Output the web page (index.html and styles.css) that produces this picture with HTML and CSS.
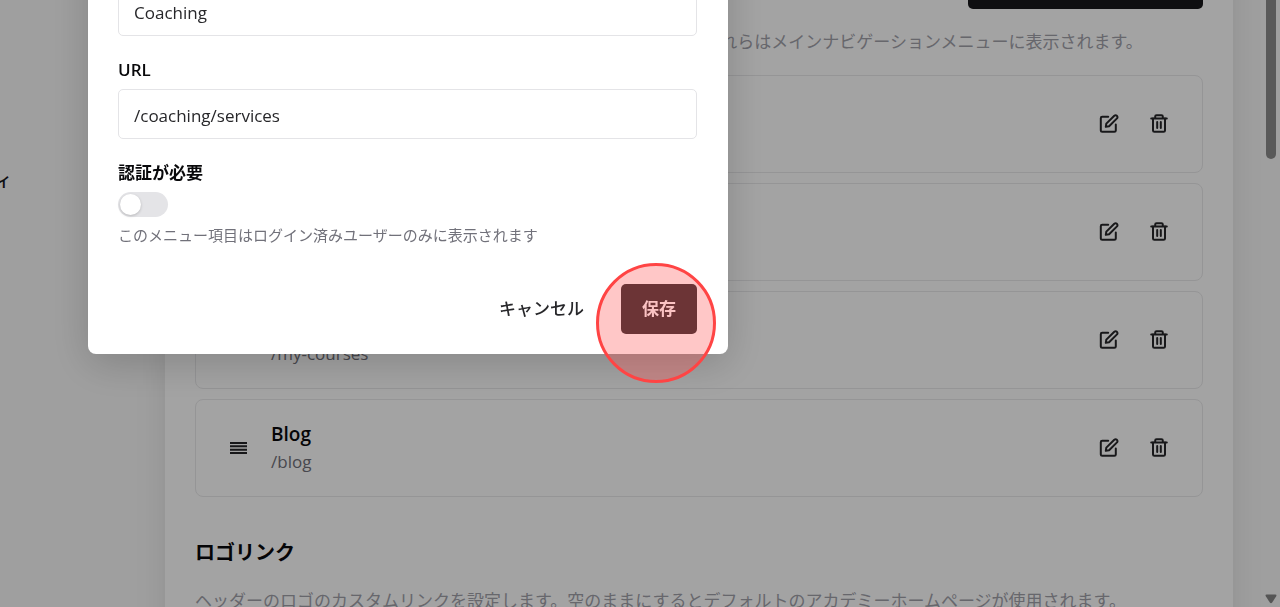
FILE: index.html
```html
<!DOCTYPE html>
<html lang="ja">

	<head>
		<meta charset="UTF-8">
		<title>ナビゲーション</title>
		<link rel="stylesheet" href="styles.css">
	</head>

	<body>
		<svg class="sprite">
			<symbol id="edit" viewBox="0 0 20 20">
				<path d="M9.2 2.8H3.2Q1.8 2.8 1.8 4.2V16.4Q1.8 17.8 3.2 17.8H15.4Q16.8 17.8 16.8 16.4V10.4" />
				<path d="M6.8 12.8L7.3 9.6L15.3 1.7Q16.6 .7 17.9 1.8Q19 3.1 18 4.4L10.1 12.3Z" />
			</symbol>
			<symbol id="trash" viewBox="0 0 20 20">
				<path d="M2.2 4.4H17.8M6.2 4.2V2.6Q6.2 1.3 7.5 1.3H12.5Q13.8 1.3 13.8 2.6V4.2" />
				<path d="M4 4.6V16.4Q4 17.8 5.4 17.8H14.6Q16 17.8 16 16.4V4.6M8.2 8V14M11.8 8V14" />
			</symbol>
			<symbol id="drag" viewBox="0 0 18 14">
				<path d="M0 1.9H17M0 5.3H17M0 8.7H17M0 12.1H17" />
			</symbol>
		</svg>

		<div class="page">
			<nav class="sidebar">
				<a href="#">コミュニティ</a>
			</nav>

			<main class="card">
				<div class="card-head">
					<button class="add" type="button">メニュー項目を追加する</button>
				</div>
				<p class="desc">ヘッダーに表示されるメニュー項目を追加・編集・削除できます。これらはメインナビゲーションメニューに表示されます。</p>

				<ul class="items">
					<li>
						<svg class="drag"><use href="#drag" /></svg>
						<div class="info">
							<h3>Home</h3>
							<p>/home</p>
						</div>
						<button type="button" aria-label="編集"><svg><use href="#edit" /></svg></button>
						<button type="button" aria-label="削除"><svg><use href="#trash" /></svg></button>
					</li>
					<li>
						<svg class="drag"><use href="#drag" /></svg>
						<div class="info">
							<h3>Courses</h3>
							<p>/courses</p>
						</div>
						<button type="button" aria-label="編集"><svg><use href="#edit" /></svg></button>
						<button type="button" aria-label="削除"><svg><use href="#trash" /></svg></button>
					</li>
					<li>
						<svg class="drag"><use href="#drag" /></svg>
						<div class="info">
							<h3>My Courses</h3>
							<p>/my-courses</p>
						</div>
						<button type="button" aria-label="編集"><svg><use href="#edit" /></svg></button>
						<button type="button" aria-label="削除"><svg><use href="#trash" /></svg></button>
					</li>
					<li>
						<svg class="drag"><use href="#drag" /></svg>
						<div class="info">
							<h3>Blog</h3>
							<p>/blog</p>
						</div>
						<button type="button" aria-label="編集"><svg><use href="#edit" /></svg></button>
						<button type="button" aria-label="削除"><svg><use href="#trash" /></svg></button>
					</li>
				</ul>

				<h2>ロゴリンク</h2>
				<p class="desc">ヘッダーのロゴのカスタムリンクを設定します。空のままにするとデフォルトのアカデミーホームページが使用されます。</p>
			</main>
		</div>

		<div class="scrollbar">
			<span class="thumb"></span>
			<svg class="arrow" viewBox="0 0 12 10"><path d="M1.5 .5H10.5Q12 .8 11.2 2.2L7.2 8.6Q6 10 4.8 8.6L.8 2.2Q0 .8 1.5 .5Z" /></svg>
		</div>

		<div class="overlay"></div>

		<form class="dialog" role="dialog">
			<div class="field">
				<label for="title">タイトル</label>
				<input id="title" type="text" value="Coaching">
			</div>
			<div class="field">
				<label for="url">URL</label>
				<input id="url" type="text" value="/coaching/services">
			</div>
			<div class="field">
				<label for="auth">認証が必要</label>
				<input id="auth" class="switch" type="checkbox">
				<p class="help">このメニュー項目はログイン済みユーザーのみに表示されます</p>
			</div>
			<div class="actions">
				<button class="cancel" type="button">キャンセル</button>
				<button class="save" type="button">保存</button>
			</div>
			<span class="marker"></span>
		</form>
	</body>

</html>
```

FILE: styles.css
```css
* {
	margin: 0;
	padding: 0;
	box-sizing: border-box;
}

body {
	height: 100vh;
	overflow: hidden;
	background: #f9f9f9;
	color: #09090b;
	font-family: "Open Sans", "Noto Sans CJK JP", sans-serif;
	font-size: 17px;
	line-height: 26px;
}

button,
input {
	font: inherit;
	color: inherit;
	border: 0;
	background: none;
}

ul {
	list-style: none;
}

.sprite {
	display: none;
}

/* page behind the dialog, scrolled down a little */
.page {
	display: flex;
	padding-right: 47px;
}

.sidebar {
	flex: 0 0 165px;
	padding-top: 168px;
}

.sidebar a {
	display: flex;
	justify-content: flex-end;
	width: 12px;
	color: #18181b;
	font-weight: 500;
	text-decoration: none;
	white-space: nowrap;
}

.card {
	flex: 1;
	min-width: 0;
	margin-top: -71px;
	padding: 30px;
	background: #fff;
	box-shadow: 0 4px 30px rgba(0, 0, 0, 0.1);
}

.card-head {
	display: flex;
	justify-content: flex-end;
}

.add {
	width: 235px;
	height: 50px;
	border-radius: 5px;
	background: #18181b;
	color: #fff;
}

.desc {
	margin-top: 20px;
	color: #a1a1aa;
	white-space: nowrap;
}

.items {
	display: flex;
	flex-direction: column;
	gap: 10px;
	margin-top: 20px;
}

.items li {
	display: flex;
	align-items: center;
	height: 98px;
	padding: 0 23px 0 34px;
	border: 1px solid #e9e9eb;
	border-radius: 8px;
}

.items svg {
	display: block;
	width: 20px;
	height: 20px;
	fill: none;
	stroke: #27272a;
	stroke-width: 2;
	stroke-linecap: round;
	stroke-linejoin: round;
}

.items .drag {
	width: 18px;
	height: 14px;
	stroke-linecap: butt;
}

.info {
	flex: 1;
	padding-left: 23px;
}

.info h3 {
	font-size: 19px;
	font-weight: 600;
	line-height: 28px;
}

.info p {
	color: #71717a;
	line-height: 28px;
}

.items button {
	width: 40px;
	height: 40px;
	padding: 10px;
}

.items button + button {
	margin-left: 10px;
}

h2 {
	margin-top: 41px;
	font-size: 20px;
	line-height: 30px;
}

.scrollbar {
	position: fixed;
	top: 0;
	right: 3px;
	bottom: 3px;
	display: flex;
	flex-direction: column;
	justify-content: space-between;
	align-items: center;
	width: 12px;
}

.thumb {
	width: 10px;
	height: 159px;
	border-radius: 0 0 5px 5px;
	background: #8b8b8b;
}

.arrow {
	width: 12px;
	height: 10px;
	fill: #858585;
}

.overlay {
	position: fixed;
	inset: 0;
	background: rgba(0, 0, 0, 0.36);
}

/* dialog */
.dialog {
	position: fixed;
	top: -77px;
	left: 88px;
	width: 640px;
	padding: 30px 31px 20px 30px;
	border-radius: 8px;
	background: #fff;
	box-shadow: 0 10px 40px rgba(0, 0, 0, 0.18);
}

.field {
	display: flex;
	flex-direction: column;
	align-items: flex-start;
	gap: 6px;
	margin-bottom: 20px;
}

.field label {
	font-weight: 600;
	line-height: 27px;
}

.field input[type="text"] {
	width: 100%;
	height: 50px;
	padding: 2px 15px 0;
	border: 1px solid #e4e4e7;
	border-radius: 5px;
	color: #27272a;
}

.field .switch {
	appearance: none;
	display: flex;
	align-items: center;
	width: 50px;
	height: 25px;
	padding: 2px;
	border-radius: 13px;
	background: #e4e4e7;
}

.switch::before {
	content: "";
	width: 21px;
	height: 21px;
	border-radius: 50%;
	background: #fff;
	box-shadow: 0 1px 3px rgba(0, 0, 0, 0.2);
}

.help {
	color: #71717a;
	font-size: 15px;
	line-height: 24px;
}

.actions {
	display: flex;
	justify-content: flex-end;
	gap: 17px;
	margin-top: 37px;
}

.actions button {
	height: 50px;
	padding: 0 20px;
	border-radius: 5px;
	color: #27272a;
	font-weight: 500;
}

.actions .save {
	width: 76px;
	background: #2d2d30;
	color: #fafafa;
	font-weight: 700;
}

/* click highlight round the save button */
.marker {
	position: absolute;
	right: 12px;
	bottom: -29px;
	width: 120px;
	height: 120px;
	border: 3px solid #ff4444;
	border-radius: 50%;
	background: rgba(255, 68, 68, 0.3);
	pointer-events: none;
}
```
